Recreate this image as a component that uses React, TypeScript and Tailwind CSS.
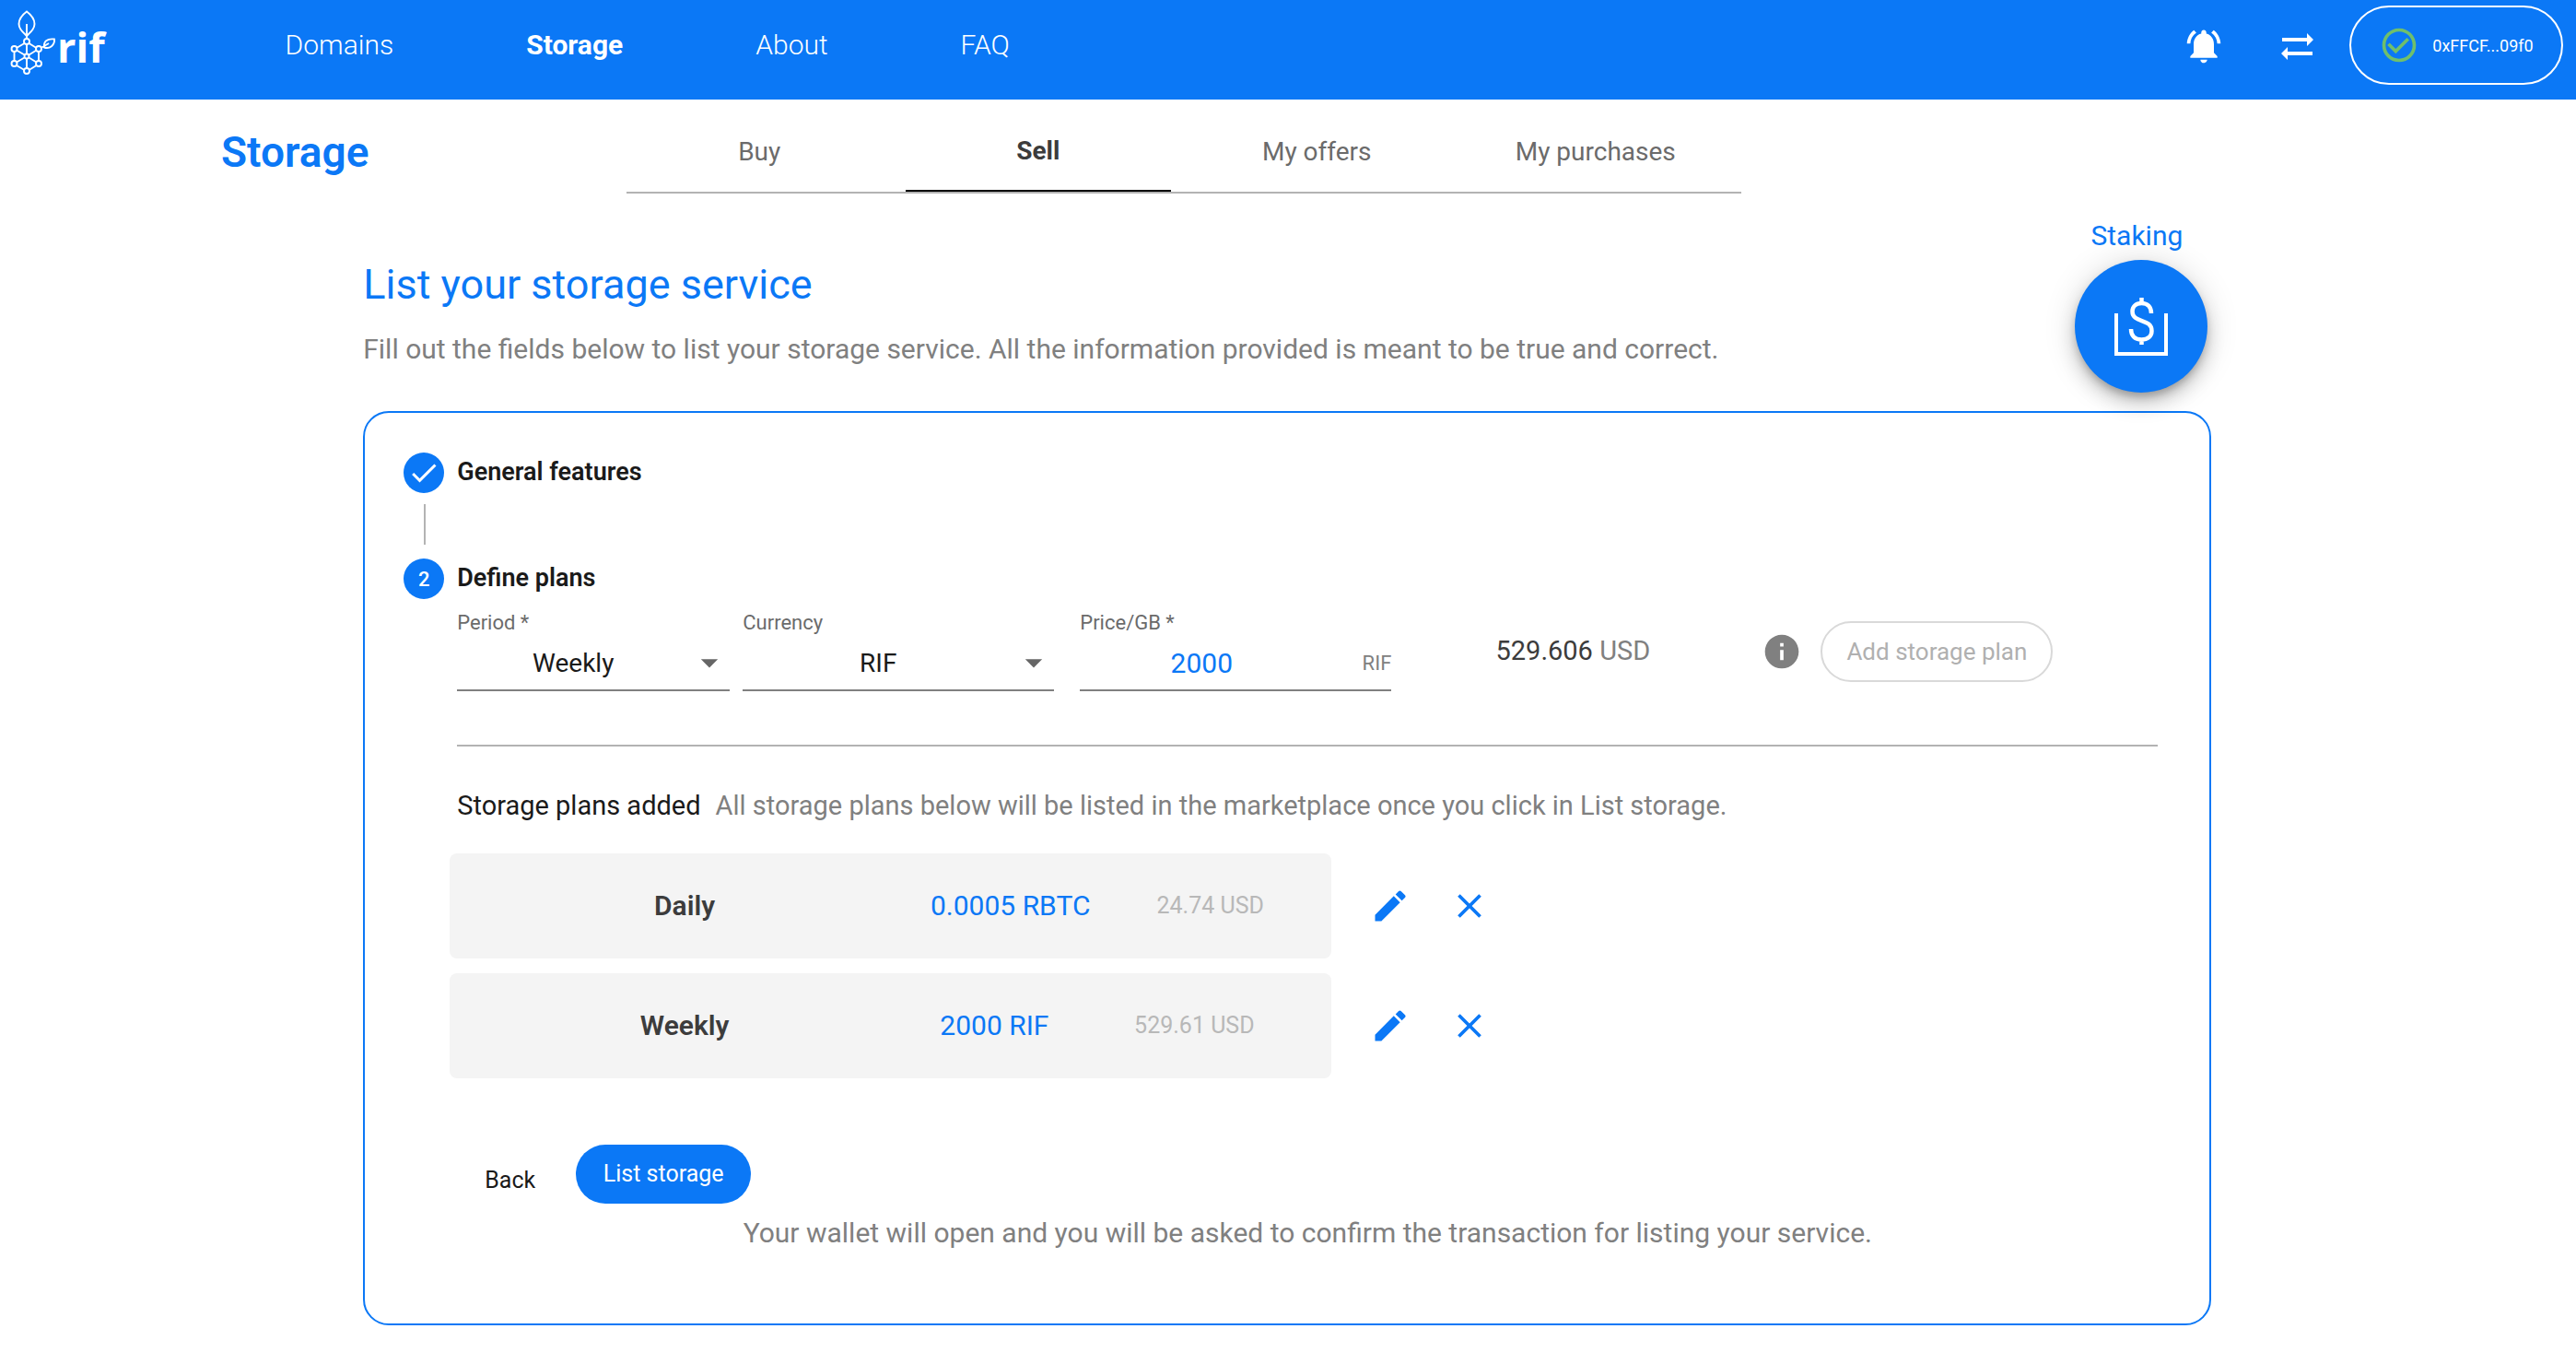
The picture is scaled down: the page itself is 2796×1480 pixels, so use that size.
import { useState } from "react";
import {
  MdCheck,
  MdCheckCircleOutline,
  MdClose,
  MdCreate,
  MdInfo,
  MdNotificationsActive,
} from "react-icons/md";

const navLinks = ["Domains", "Storage", "About", "FAQ"];
const tabs = ["Buy", "Sell", "My offers", "My purchases"];
const plans = [
  { period: "Daily", price: "0.0005 RBTC", fiat: "24.74 USD" },
  { period: "Weekly", price: "2000 RIF", fiat: "529.61 USD" },
];

function RifLogo() {
  return (
    <a href="#home" aria-label="rif" className="flex items-center text-white">
      <svg width="62" height="80" viewBox="0 9 62 80" fill="none" stroke="currentColor" strokeWidth="1.9">
        <path d="M29 12.500C23 17 20.500 21 20.500 26C20.500 31 24 34 29 39C34 34 37.500 31 37.500 26C37.500 21 35 17 29 12.500Z" />
        <path d="M29 26V42M29 48V58M29 64V74" />
        <path d="M18 52L26.500 47M31.500 47L39.500 52M15.500 56V66M42 56V66M18 71L26.500 76M31.500 76L39.500 71" />
        <path d="M18 54.500L26.500 59.500M31.500 62.500L39.500 67.500M39.500 54.500L31.500 59.500M26.500 62.500L18 67.500" />
        <path d="M44.500 52L53 47M48 51.500C47 45 51 41.500 59 42.500C59.500 49 54 53.500 48 51.500Z" />
        <circle cx="29" cy="45" r="3" />
        <circle cx="15.500" cy="53" r="3" />
        <circle cx="42" cy="53" r="3" />
        <circle cx="29" cy="61" r="2.500" />
        <circle cx="15.500" cy="69" r="3" />
        <circle cx="42" cy="69" r="3" />
        <circle cx="29" cy="77" r="3" />
      </svg>
      <span className="pt-1 font-['Open_Sans',sans-serif] text-[45px] leading-[56px] font-bold">rif</span>
    </a>
  );
}

function TransferIcon() {
  return (
    <svg width="44" height="44" viewBox="0 0 44 44" fill="currentColor" aria-hidden="true">
      <path d="M5 13H32V8L39 15L32 22V17H5Z" />
      <path d="M38 28H11V23L4 30L11 37V32H38Z" />
    </svg>
  );
}

function StakingIcon() {
  return (
    <svg width="60" height="68" viewBox="-1 -1 60 68" fill="none" stroke="currentColor" aria-hidden="true">
      <path d="M2 19V63H56V19" strokeWidth="4" />
      <path
        d="M29.500 2V8M29.500 47V53M40 19C40 12 36 8 29.500 8C23 8 19.500 12 19.500 17C19.500 30 40.500 24 40.500 38C40.500 44 36 47.500 29.500 47.500C22 47.500 18 43 18 36"
        strokeWidth="4.500"
      />
    </svg>
  );
}

function SelectField({
  id,
  label,
  options,
  value,
  onChange,
}: {
  id: string;
  label: string;
  options: string[];
  value: string;
  onChange: (value: string) => void;
}) {
  return (
    <div className="flex flex-col">
      <label htmlFor={id} className="text-[22px] leading-6 text-[#6b6b6b]">
        {label}
      </label>
      <div className="mt-0.5 grid h-[60px] items-center border-b-2 border-[#808080]">
        <select
          id={id}
          value={value}
          onChange={(e) => onChange(e.target.value)}
          className="col-start-1 row-start-1 h-full w-full appearance-none bg-transparent pt-0.5 pr-11 text-center text-[28px] text-[#1a1a1a] outline-none"
        >
          {options.map((o) => (
            <option key={o}>{o}</option>
          ))}
        </select>
        <svg
          width="44"
          height="44"
          viewBox="0 0 24 24"
          fill="#666666"
          aria-hidden="true"
          className="pointer-events-none col-start-1 row-start-1 justify-self-end"
        >
          <path d="M7 10l5 5 5-5z" />
        </svg>
      </div>
    </div>
  );
}

export default function App() {
  const [period, setPeriod] = useState("Weekly");
  const [currency, setCurrency] = useState("RIF");
  const [price, setPrice] = useState("2000");

  return (
    <div className="min-h-screen bg-white font-['Roboto',sans-serif]">
      <header className="flex items-center bg-[#0b78f6] pt-1.5 pr-3.5 pb-4 text-white">
        <RifLogo />
        <nav className="ml-[196px] flex gap-36 text-[30px] leading-10">
          {navLinks.map((link) => (
            <a key={link} href={`#${link.toLowerCase()}`} className={link === "Storage" ? "font-bold" : "font-light"}>
              {link}
            </a>
          ))}
        </nav>
        <div className="ml-auto flex items-center">
          <button type="button" aria-label="Notifications" className="pt-0.5">
            <MdNotificationsActive size={44} />
          </button>
          <button type="button" aria-label="Transactions" className="ml-[58px] pt-0.5">
            <TransferIcon />
          </button>
          <button
            type="button"
            className="ml-[34px] flex h-[86px] w-[232px] items-center justify-center gap-3.5 rounded-full border-2 border-white text-[18px]"
          >
            <MdCheckCircleOutline size={44} className="text-[#6fbf6c]" />
            0xFFCF...09f0
          </button>
        </div>
      </header>

      <div className="grid grid-cols-[440fr_1210fr_906fr] pl-60">
        <p className="pt-[29px] text-[46px] leading-[56px] font-semibold text-[#0b78f6]">Storage</p>
        <nav className="grid grid-cols-4 border-b-2 border-[#b3b3b3] text-[28px]">
          {tabs.map((tab) => (
            <a
              key={tab}
              href={`#${tab.toLowerCase().replace(" ", "-")}`}
              className={
                tab === "Sell"
                  ? "mr-3.5 flex h-[100px] items-center justify-center border-b-2 border-black pt-3.5 font-bold text-[#3c3c3c]"
                  : "mr-3.5 flex h-[100px] items-center justify-center pt-3.5 text-[#6b6b6b]"
              }
            >
              {tab}
            </a>
          ))}
        </nav>
      </div>

      <main className="mr-[14.15%] ml-[14.1%] pt-[30px] pb-10">
        <div className="flex items-start justify-between">
          <div className="pt-[41px]">
            <h1 className="text-[45px] leading-[56px] text-[#0b78f6]">List your storage service</h1>
            <p className="mt-[22px] text-[30px] leading-10 text-[#808080]">
              Fill out the fields below to list your storage service. All the information provided is meant to be true
              and correct.
            </p>
          </div>
          <div className="mr-1 flex flex-col items-center">
            <span id="staking-label" className="pr-2.5 text-[30px] leading-8 text-[#0b78f6]">
              Staking
            </span>
            <button
              type="button"
              aria-labelledby="staking-label"
              className="mt-2.5 flex size-36 items-center justify-center rounded-full bg-[#0b78f6] text-white shadow-[0_6px_10px_-2px_rgba(0,0,0,0.25),0_12px_20px_rgba(0,0,0,0.16),0_2px_36px_rgba(0,0,0,0.14)]"
            >
              <StakingIcon />
            </button>
          </div>
        </div>

        <section className="mt-5 rounded-[28px] border-2 border-[#0b78f6] pt-[43px] pr-14 pb-[78px] pl-[42px]">
          <div className="flex gap-3.5">
            <span className="flex size-11 items-center justify-center rounded-full bg-[#0b78f6] text-white">
              <MdCheck size={36} />
            </span>
            <h2 className="text-[27px] leading-[42px] font-semibold text-[#1a1a1a]">General features</h2>
          </div>
          <div className="mt-3 ml-[22px] h-11 w-0.5 bg-[#b3b3b3]" />
          <div className="mt-[15px] flex gap-3.5">
            <span className="flex size-11 items-center justify-center rounded-full bg-[#0b78f6] text-[22px] font-medium text-white">
              2
            </span>
            <h2 className="text-[27px] leading-[42px] font-semibold text-[#1a1a1a]">Define plans</h2>
          </div>

          <div className="mt-3.5 pl-[58px]">
            <form className="grid grid-cols-[310fr_366fr_338fr_832fr]" onSubmit={(e) => e.preventDefault()}>
              <div className="pr-3.5">
                <SelectField
                  id="period"
                  label="Period *"
                  options={["Daily", "Weekly", "Monthly"]}
                  value={period}
                  onChange={setPeriod}
                />
              </div>
              <div className="pr-7">
                <SelectField
                  id="currency"
                  label="Currency"
                  options={["RIF", "RBTC"]}
                  value={currency}
                  onChange={setCurrency}
                />
              </div>
              <div className="flex flex-col">
                <label htmlFor="price" className="text-[22px] leading-6 text-[#6b6b6b]">
                  Price/GB *
                </label>
                <div className="mt-0.5 flex h-[60px] items-center border-b-2 border-[#808080]">
                  <input
                    id="price"
                    value={price}
                    onChange={(e) => setPrice(e.target.value)}
                    className="w-full min-w-0 flex-1 bg-transparent text-center text-[30px] text-[#0b78f6] outline-none"
                  />
                  <span className="w-[74px] text-right text-[22px] text-[#808080]">RIF</span>
                </div>
              </div>
              <div className="flex items-center">
                <p className="flex-1 text-center text-[29px] text-[#3c3c3c]">
                  529.606 <span className="text-[#808080]">USD</span>
                </p>
                <MdInfo size={44} className="ml-2 text-[#808080]" />
                <button
                  type="button"
                  disabled
                  className="mr-[114px] ml-5 h-[66px] w-[252px] rounded-full border-2 border-[#d9d9d9] text-[26px] text-[#b0b0b0]"
                >
                  Add storage plan
                </button>
              </div>
            </form>

            <hr className="mt-[58px] border-t-2 border-[#b3b3b3]" />

            <p className="mt-11 flex gap-4 text-[29px] leading-10">
              <span className="text-[#1a1a1a]">Storage plans added</span>
              <span className="text-[#808080]">
                All storage plans below will be listed in the marketplace once you click in List storage.
              </span>
            </p>

            <ul className="mt-8 -ml-2 flex flex-col gap-4">
              {plans.map((plan) => (
                <li key={plan.period} className="flex items-center">
                  <div className="flex h-[114px] w-[51.6%] items-center rounded-lg bg-[#f4f4f4] pr-[37px] pl-6 leading-10">
                    <span className="flex-1 text-center text-[30px] font-semibold text-[#3c3c3c]">{plan.period}</span>
                    <div className="flex w-[434px] items-center justify-around">
                      <span className="text-[30px] text-[#0b78f6]">{plan.price}</span>
                      <span className="text-[25px] text-[#b8b8b8]">{plan.fiat}</span>
                    </div>
                  </div>
                  <button type="button" aria-label={`Edit ${plan.period} plan`} className="ml-[42px] text-[#0b78f6]">
                    <MdCreate size={44} />
                  </button>
                  <button type="button" aria-label={`Remove ${plan.period} plan`} className="ml-[42px] text-[#0b78f6]">
                    <MdClose size={44} />
                  </button>
                </li>
              ))}
            </ul>

            <div className="mt-[72px] ml-[30px] flex items-end gap-11 text-[25px] leading-[50px]">
              <button type="button" className="text-[#1a1a1a]">
                Back
              </button>
              <button type="button" className="h-16 w-[190px] rounded-full bg-[#0b78f6] text-white">
                List storage
              </button>
            </div>
            <p className="mt-3 text-center text-[30px] leading-10 text-[#808080]">
              Your wallet will open and you will be asked to confirm the transaction for listing your service.
            </p>
          </div>
        </section>
      </main>
    </div>
  );
}
